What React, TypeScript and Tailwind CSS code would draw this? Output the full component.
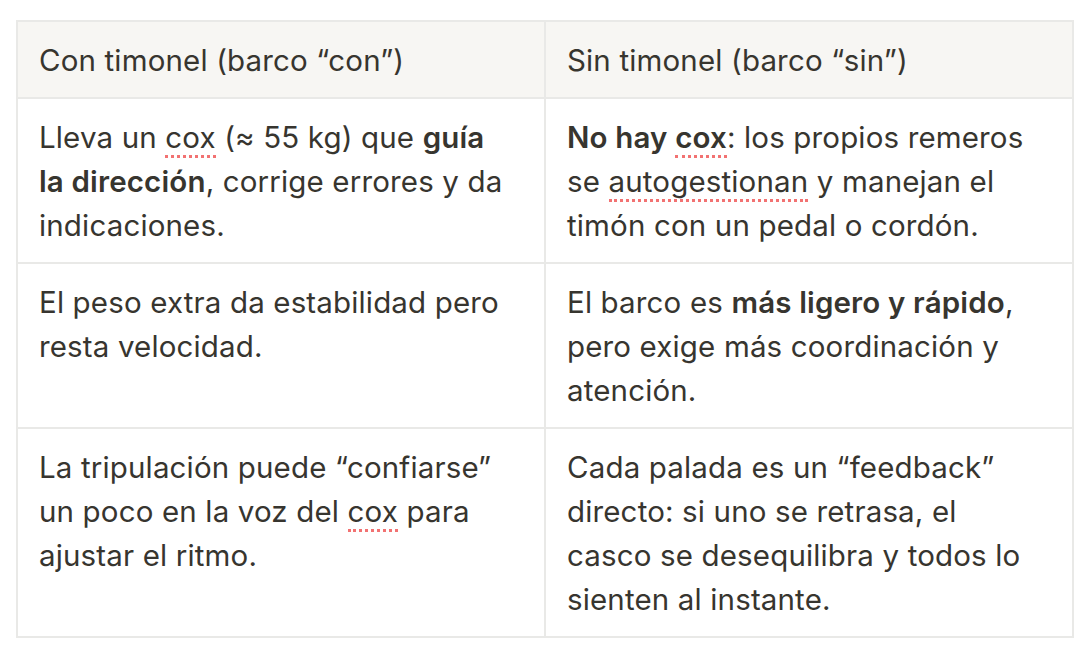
import React from "react";

// spell-check style dotted underline
const spell = "border-b-[3px] border-dotted border-[#f27272]";

function Cox() {
  return <span className={spell}>cox</span>;
}

const rows: { left: React.ReactNode; right: React.ReactNode }[] = [
  {
    left: (
      <>
        Lleva un <Cox /> (≈ 55 kg) que <b className="font-semibold">guía<br />la dirección</b>, corrige errores y da<br />indicaciones.
      </>
    ),
    right: (
      <>
        <b className="font-semibold">No hay <Cox /></b>: los propios remeros<br />se <span className={spell}>autogestionan</span> y manejan el<br />timón con un pedal o cordón.
      </>
    ),
  },
  {
    left: (
      <>
        El peso extra da estabilidad pero<br />resta velocidad.
      </>
    ),
    right: (
      <>
        El barco es <b className="font-semibold">más ligero y rápido</b>,<br />pero exige más coordinación y<br />atención.
      </>
    ),
  },
  {
    left: (
      <>
        La tripulación puede “confiarse”<br />un poco en la voz del <Cox /> para<br />ajustar el ritmo.
      </>
    ),
    right: (
      <>
        Cada palada es un “feedback”<br />directo: si uno se retrasa, el<br />casco se desequilibra y todos lo<br />sienten al instante.
      </>
    ),
  },
];

export default function App() {
  return (
    <div className="min-h-screen bg-white pl-4 pt-5 font-['Inter','Noto_Sans',sans-serif] text-[29.5px] leading-[44px] tracking-[0.15px] text-[#37352f]">
      <table className="w-[1058px] table-fixed border-collapse">
        <thead>
          <tr className="bg-[#f7f6f3]">
            <th className="border-2 border-[#e9e9e7] px-[21px] pt-[16px] pb-[15px] text-left font-normal">Con timonel (barco “con”)</th>
            <th className="border-2 border-[#e9e9e7] px-[21px] pt-[16px] pb-[15px] text-left font-normal">Sin timonel (barco “sin”)</th>
          </tr>
        </thead>
        <tbody>
          {rows.map((r, i) => (
            <tr key={i}>
              <td className="border-2 border-[#e9e9e7] px-[21px] pt-[16px] pb-[15px] align-top">{r.left}</td>
              <td className="border-2 border-[#e9e9e7] px-[21px] pt-[16px] pb-[15px] align-top">{r.right}</td>
            </tr>
          ))}
        </tbody>
      </table>
    </div>
  );
}
